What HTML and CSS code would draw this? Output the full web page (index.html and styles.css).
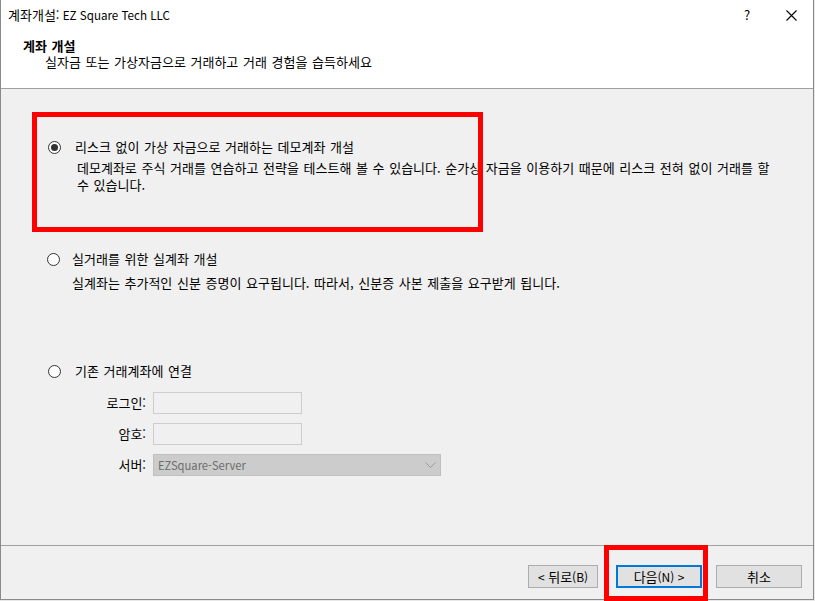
FILE: index.html
```html
<!DOCTYPE html>
<html lang="ko">
<head>
<meta charset="utf-8">
<title>계좌개설</title>
<link rel="stylesheet" href="styles.css">
</head>
<body>
<div class="window">
  <div class="top">
    <div class="titlebar">
      <span class="title">계좌개설:<span class="title-lat"> EZ Square Tech LLC</span></span>
      <span class="help">?</span>
      <span class="close"><svg width="11" height="11" viewBox="0 0 11 11"><path d="M0.5 0.5L10.5 10.5M10.5 0.5L0.5 10.5" stroke="#000" stroke-width="1.1" fill="none"/></svg></span>
    </div>
    <div class="header">
      <div class="h-title">계좌 개설</div>
      <div class="h-sub">실자금 또는 가상자금으로 거래하고 거래 경험을 습득하세요</div>
    </div>
  </div>
  <div class="content">
    <div class="option opt1">
      <div class="opt-row"><span class="radio checked"></span><span class="opt-label">리스크 없이 가상 자금으로 거래하는 데모계좌 개설</span></div>
      <p class="desc desc1">데모계좌로 주식 거래를 연습하고 전략을 테스트해 볼 수 있습니다. 순가상 자금을 이용하기 때문에 리스크 전혀 없이 거래를 할 수 있습니다.</p>
    </div>
    <div class="option opt2">
      <div class="opt-row"><span class="radio"></span><span class="opt-label">실거래를 위한 실계좌 개설</span></div>
      <p class="desc desc2">실계좌는 추가적인 신분 증명이 요구됩니다. 따라서, 신분증 사본 제출을 요구받게 됩니다.</p>
    </div>
    <div class="option opt3">
      <div class="opt-row"><span class="radio"></span><span class="opt-label">기존 거래계좌에 연결</span></div>
      <div class="form">
        <div class="frow"><span class="flabel">로그인:</span><span class="input"></span></div>
        <div class="frow"><span class="flabel">암호:</span><span class="input"></span></div>
        <div class="frow"><span class="flabel">서버:</span><span class="select"><span class="select-text">EZSquare-Server</span><svg width="11" height="7" viewBox="0 0 11 7"><path d="M0.5 0.5L5.5 5.5L10.5 0.5" stroke="#9a9a9a" stroke-width="1" fill="none"/></svg></span></div>
      </div>
    </div>
    <div class="mark mark-options"></div>
  </div>
  <div class="footer">
    <span class="btn btn-back"><span class="lat">&lt;</span>&nbsp;뒤로<span class="lat">(B)</span></span>
    <span class="btn btn-next">다음<span class="lat">(N) &gt;</span></span>
    <span class="btn btn-cancel">취소</span>
    <div class="mark mark-next"></div>
  </div>
</div>
</body>
</html>
```

FILE: styles.css
```css
* { box-sizing: border-box; }
html, body { margin: 0; padding: 0; }
body {
  width: 815px;
  height: 601px;
  background: #e8e8e8;
  font-family: "Noto Sans CJK KR", "Noto Sans", sans-serif;
  font-size: 13px;
  color: #000;
  overflow: hidden;
}
.lat { font-size: 12px; }
.window {
  width: 814px;
  height: 600px;
  border-left: 1px solid #8a8a8a;
  border-right: 1px solid #8a8a8a;
  border-bottom: 1px solid #8a8a8a;
  background: #f0f0f0;
  display: flex;
  flex-direction: column;
}
.top {
  background: #fff;
  height: 89px;
  border-bottom: 1px solid #a0a0a0;
}
.titlebar {
  height: 30px;
  display: flex;
  align-items: center;
  padding-left: 7px;
}
.title { line-height: 16px; flex: 1; }
.title-lat { font-size: 11.6px; }
.help { width: 7px; line-height: 16px; margin-right: 35px; font-size: 13px; }
.close { width: 11px; height: 11px; margin-right: 16px; display: flex; }
.header {
  padding: 8px 0 0 22px;
  line-height: 16px;
}
.h-title { font-weight: bold; word-spacing: 1px; }
.h-sub { padding-left: 22px; word-spacing: 1px; }

.content {
  position: relative;
  height: 456px;
  padding-top: 50px;
}
.opt-row {
  display: flex;
  align-items: center;
  height: 16px;
  padding-left: 47px;
}
.opt-label { margin-left: 14px; line-height: 16px; word-spacing: 1px; }
.radio {
  flex: none;
  width: 13px;
  height: 13px;
  border-radius: 50%;
  border: 1px solid #333;
  background: #fff;
  display: flex;
  align-items: center;
  justify-content: center;
}
.radio.checked::after {
  content: "";
  width: 7px;
  height: 7px;
  border-radius: 50%;
  background: #333;
}
.desc {
  margin: 0;
  line-height: 17px;
  word-spacing: 1px;
}
.desc1 { margin: 4px 0 0 76px; width: 700px; }
.opt2 { margin-top: 58px; }
.opt2 .opt-row { padding-left: 46px; }
.opt2 .opt-label { margin-left: 12px; }
.desc2 { margin: 7px 0 0 71px; }
.opt3 { margin-top: 72px; }
.form {
  margin-top: 13px;
  display: flex;
  flex-direction: column;
  gap: 9px;
}
.frow {
  display: flex;
  align-items: center;
  height: 22px;
}
.flabel {
  width: 146px;
  text-align: right;
  padding-right: 1px;
  line-height: 16px;
}
.input {
  margin-left: 6px;
  width: 149px;
  height: 22px;
  background: #f0f0f0;
  border: 1px solid #cdcdcd;
}
.select {
  margin-left: 6px;
  width: 288px;
  height: 22px;
  background: #cccccc;
  border: 1px solid #bfbfbf;
  display: flex;
  align-items: center;
  justify-content: space-between;
  padding: 0 4px 0 4px;
  color: #6d6d6d;
}
.select-text { line-height: 16px; font-size: 11.2px; }

.footer {
  position: relative;
  flex: 1;
  border-top: 1px solid #a0a0a0;
  display: flex;
  justify-content: flex-end;
  align-items: flex-start;
  padding: 19px 11px 0 0;
}
.btn {
  height: 23px;
  background: #e1e1e1;
  border: 1px solid #adadad;
  display: flex;
  align-items: center;
  justify-content: center;
  line-height: 16px;
}
.btn-back { width: 70px; }
.btn-next {
  width: 86px;
  margin-left: 18px;
  border: 2px solid #0078d7;
}
.btn-cancel { width: 86px; margin-left: 14px; }

.mark {
  position: absolute;
  border: 5px solid #ff0000;
}
.mark-options { left: 31px; top: 23px; width: 451px; height: 120px; }
.mark-next { left: 603px; top: -1px; width: 104px; height: 56px; }
```
